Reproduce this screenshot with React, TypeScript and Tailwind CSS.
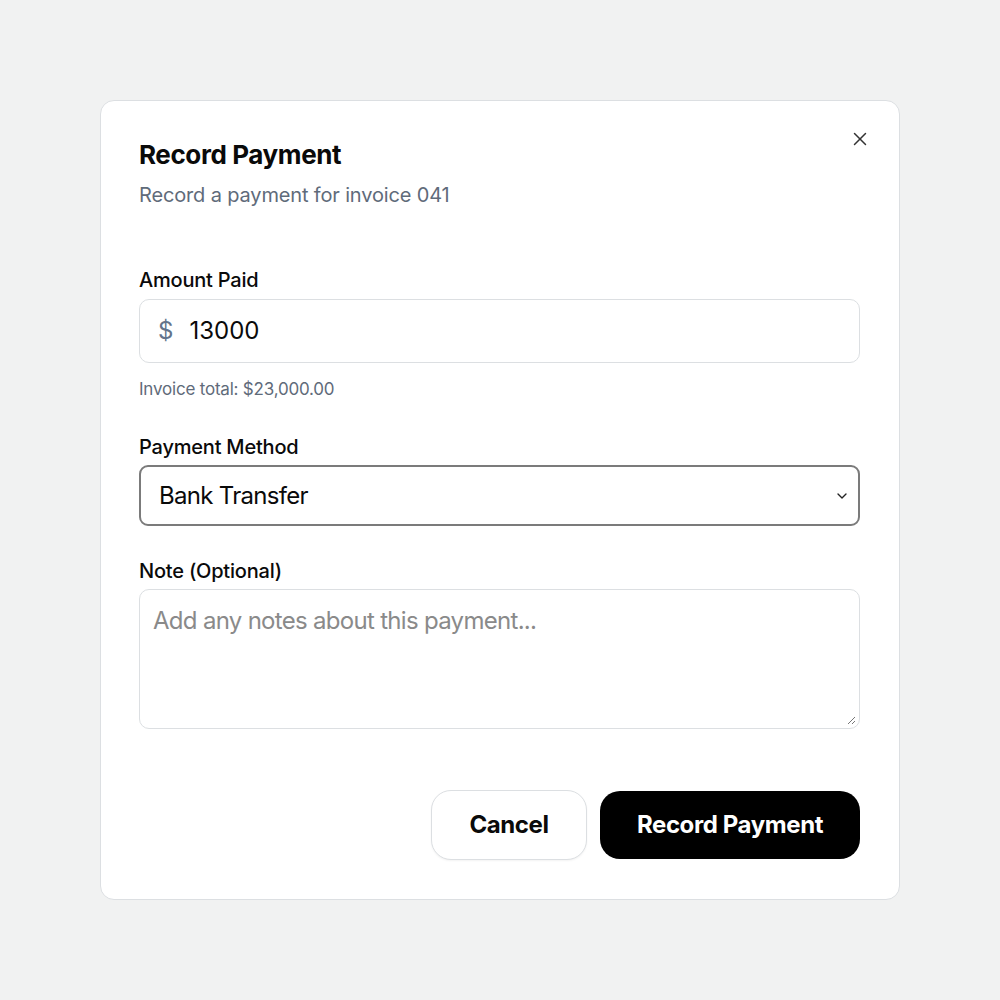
import { X, ChevronDown } from 'lucide-react';

export default function App() {
    return (
        <div className="min-h-screen w-full bg-[#f1f2f2] flex items-center justify-center font-['Inter',sans-serif]">
            <div className="relative w-[800px] h-[800px] bg-white rounded-[14px] border border-[#dcdfe2] pl-[38px] pr-[39px] pt-[36px]">
                {/* Close */}
                <button className="absolute top-[27px] right-[28px] text-[#333]" aria-label="Close">
                    <X className="w-[22px] h-[22px]" strokeWidth={1.6} />
                </button>

                {/* Header */}
                <h2 className="text-[26px] leading-[36px] font-bold tracking-[-0.4px] text-[#0a0a0a]">Record Payment</h2>
                <p className="mt-[8px] text-[20px] leading-[28px] tracking-[-0.15px] text-[#5f6b7a]">Record a payment for invoice 041</p>

                {/* Amount */}
                <div className="mt-[57px]">
                    <label className="block text-[20px] leading-[28px] font-medium tracking-[-0.2px] text-[#0a0a0a]">Amount Paid</label>
                    <div className="mt-[5px] flex items-center h-[64px] rounded-[10px] border border-[#dcdfe2] px-[18px]">
                        <span className="text-[24px] text-[#64748b]">$</span>
                        <span className="ml-[16px] text-[24px] text-[#0a0a0a]">13000</span>
                    </div>
                    <p className="mt-[14px] text-[17px] leading-[24px] tracking-[-0.2px] text-[#5f6b7a]">Invoice total: $23,000.00</p>
                </div>

                {/* Method */}
                <div className="mt-[32px]">
                    <label className="block text-[20px] leading-[28px] font-medium tracking-[-0.2px] text-[#0a0a0a]">Payment Method</label>
                    <div className="mt-[4px] flex items-center justify-between h-[61px] rounded-[9px] border-2 border-[#7b7b7b] pl-[18px] pr-[8px]">
                        <span className="text-[24px] text-[#0a0a0a] tracking-[-0.7px]">Bank Transfer</span>
                        <ChevronDown className="w-[16px] h-[16px] text-[#222]" strokeWidth={2} />
                    </div>
                </div>

                {/* Note */}
                <div className="mt-[31px]">
                    <label className="block text-[20px] leading-[28px] font-medium tracking-[-0.2px] text-[#0a0a0a]">Note (Optional)</label>
                    <div className="relative mt-[4px] h-[140px] rounded-[10px] border border-[#dcdfe2] px-[13px] pt-[14px]">
                        <span className="text-[24px] leading-[34px] text-[#8a8a8a] tracking-[-0.7px]">Add any notes about this payment...</span>
                        <svg className="absolute right-[3px] bottom-[3px]" width="10" height="10" viewBox="0 0 10 10">
                            <path d="M9 2 L2 9 M9 6 L6 9" stroke="#777" strokeWidth="1" />
                        </svg>
                    </div>
                </div>

                {/* Actions */}
                <div className="mt-[61px] flex justify-end items-center gap-[13px]">
                    <button className="h-[70px] w-[156px] rounded-[20px] border border-[#dcdfe2] bg-white text-[24px] font-bold text-[#0a0a0a] tracking-[-0.4px] shadow-[0_1px_2px_rgba(0,0,0,0.05)]">
                        Cancel
                    </button>
                    <button className="h-[68px] w-[260px] rounded-[20px] bg-black text-[24px] font-bold text-white tracking-[-0.4px]">
                        Record Payment
                    </button>
                </div>
            </div>
        </div>
    );
}
